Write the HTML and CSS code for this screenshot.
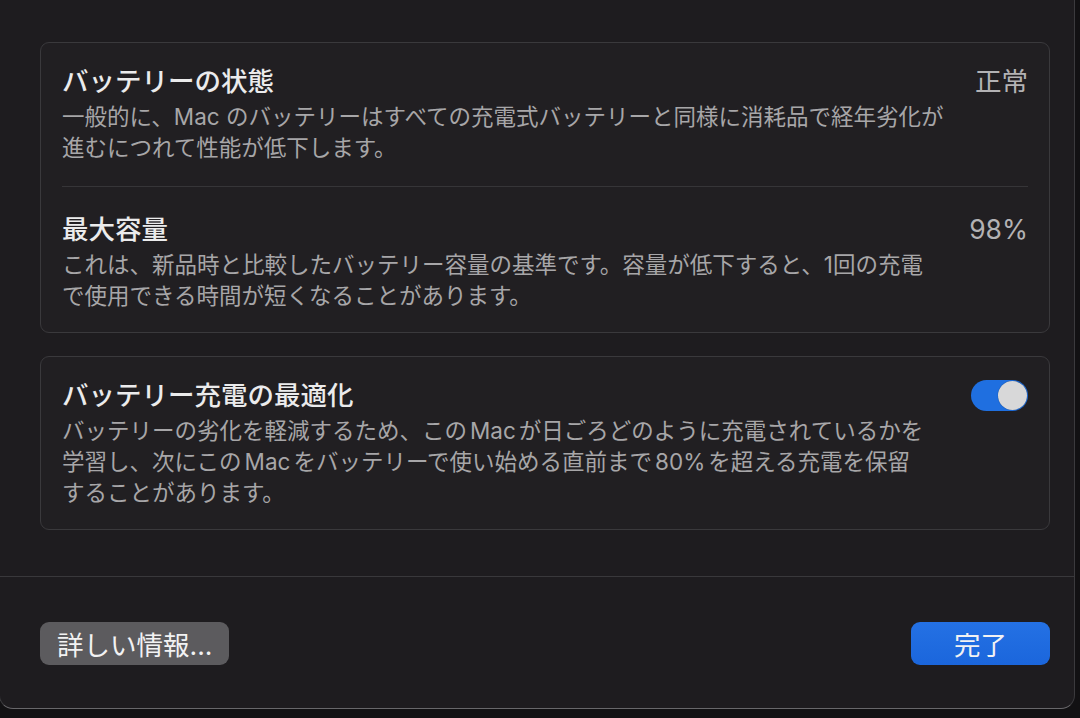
FILE: index.html
```html
<!DOCTYPE html>
<html lang="ja">
<head>
    <meta charset="UTF-8">
    <meta name="viewport" content="width=device-width, initial-scale=1.0">
    <title>バッテリー</title>
    <link rel="stylesheet" href="styles.css">
</head>
<body>
    <div class="window">
        <div class="content">
            <div class="card">
                <div class="row">
                    <div class="row-text">
                        <div class="row-title">バッテリーの状態</div>
                        <div class="row-desc">一般的に、Mac のバッテリーはすべての充電式バッテリーと同様に消耗品で経年劣化が<br>進むにつれて性能が低下します。</div>
                    </div>
                    <div class="row-value">正常</div>
                </div>
                <div class="row">
                    <div class="row-text">
                        <div class="row-title">最大容量</div>
                        <div class="row-desc">これは、新品時と比較したバッテリー容量の基準です。容量が低下すると、1回の充電<br>で使用できる時間が短くなることがあります。</div>
                    </div>
                    <div class="row-value">98%</div>
                </div>
            </div>

            <div class="card">
                <div class="row">
                    <div class="row-text">
                        <div class="row-title">バッテリー充電の最適化</div>
                        <div class="row-desc">バッテリーの劣化を軽減するため、この<span class="latin">Mac</span>が日ごろどのように充電されているかを<br>学習し、次にこの<span class="latin">Mac</span>をバッテリーで使い始める直前まで<span class="latin">80%</span>を超える充電を保留<br>することがあります。</div>
                    </div>
                    <div class="switch on"><span class="knob"></span></div>
                </div>
            </div>
        </div>

        <div class="footer">
            <button class="btn btn-secondary">詳しい情報...</button>
            <button class="btn btn-primary">完了</button>
        </div>
    </div>
</body>
</html>
```

FILE: styles.css
```css
body {
    margin: 0;
    background-color: #121113;
    font-family: Inter, "Noto Sans CJK JP", sans-serif;
    color: #e9e9ea;
    overflow: hidden;
}
.window {
    width: 1076px;
    height: 709px;
    box-sizing: border-box;
    margin-left: -1px;
    background-color: #1e1c1f;
    border: 1px solid #3b3a3d;
    border-top: none;
    border-bottom-color: #68676a;
    border-radius: 0 0 14px 14px;
    display: flex;
    flex-direction: column;
}
.content {
    padding: 42px 24px 46px 40px;
}
.card {
    background-color: #211f22;
    border: 1px solid #3a393c;
    border-radius: 9px;
    padding: 0 21px;
}
.card + .card {
    margin-top: 23px;
}
.row {
    display: flex;
    align-items: flex-start;
    gap: 24px;
    padding: 21px 0;
}
.row + .row {
    margin-top: 2px;
    border-top: 1px solid #363538;
    padding-top: 25px;
}
.row-text {
    flex: 1;
    min-width: 0;
}
.row-title {
    font-size: 26.5px;
    line-height: 34px;
    font-weight: 500;
    color: #ebebec;
}
.row-desc {
    margin-top: 3px;
    font-size: 22.5px;
    line-height: 31px;
    color: #a7a6a8;
}
.latin {
    margin: 0 3px;
}
.row-value {
    font-size: 26.5px;
    line-height: 34px;
    color: #b3b2b4;
    white-space: nowrap;
}
.switch {
    position: relative;
    width: 57px;
    height: 31px;
    margin-top: 2px;
    border-radius: 16px;
    background-color: #3a393c;
    flex-shrink: 0;
}
.switch.on {
    background-color: #1f6fe0;
}
.knob {
    position: absolute;
    top: 1px;
    right: 1px;
    width: 29px;
    height: 29px;
    border-radius: 50%;
    background-color: #d8d8d9;
    box-shadow: 0 0 1px rgba(0,0,0,0.5);
}
.footer {
    flex: 1;
    border-top: 1px solid #39383b;
    padding: 45px 24px 0 40px;
    display: flex;
    justify-content: space-between;
    align-items: flex-start;
}
.btn {
    height: 43px;
    border: none;
    border-radius: 9px;
    font-family: Inter, "Noto Sans CJK JP", sans-serif;
    font-size: 26.5px;
    color: #f2f2f3;
    padding: 0 17px;
    cursor: pointer;
}
.btn-secondary {
    background-color: #5c5b5e;
}
.btn-primary {
    width: 139px;
    background: linear-gradient(#2471e4, #1b66dc);
}
```
